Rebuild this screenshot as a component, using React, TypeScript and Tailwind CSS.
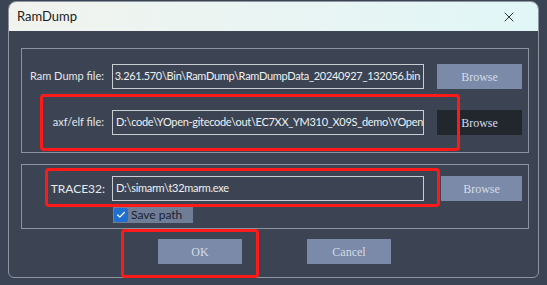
import { Check, X } from 'lucide-react'

const ui = { fontFamily: 'Lato, "Noto Sans", sans-serif' }
const btnFont = { fontFamily: '"Liberation Serif", "DejaVu Serif", serif' }

function PathInput({ value, alignEnd }: { value: string; alignEnd?: boolean }) {
  return (
    <div
      className={`flex h-[25px] w-[312px] items-center overflow-hidden whitespace-nowrap border border-[#c9ccd0] px-[3px] text-[11px] tracking-[-0.3px] text-[#eef0f2] ${alignEnd ? 'justify-end' : 'justify-start'}`}
      style={ui}
    >
      <span className="shrink-0">{value}</span>
    </div>
  )
}

function BrowseBtn({ dark, w = 'w-[85px]' }: { dark?: boolean; w?: string }) {
  return (
    <div
      className={`flex h-[25px] ${w} items-center justify-center text-[12px] text-[#d7dce6] ${dark ? 'bg-[#22272e]' : 'bg-[#7a8aa8]'}`}
      style={btnFont}
    >
      Browse
    </div>
  )
}

export default function App() {
  return (
    <div className="relative h-[285px] w-[547px] overflow-hidden bg-[#3a4454] pt-[1px] pl-[8px]">
      <div className="relative h-[277px] w-[531px] overflow-hidden rounded-t-[8px] rounded-b-[6px] border border-[#8e959f] bg-[#3c4453]">
        {/* title bar */}
        <div className="flex h-[29px] items-center justify-between bg-gradient-to-r from-[#f1f3ee] to-[#e1f6f7] pl-[8px] pr-[21px]">
          <span className="text-[13px] text-[#1a1a1a]" style={ui}>RamDump</span>
          <X className="h-[16px] w-[16px] text-[#222]" strokeWidth={1.4} />
        </div>

        <div className="px-[12px] pt-[17px]">
          {/* group 1 */}
          <div className="flex h-[105px] w-[508px] flex-col gap-[21px] border border-[#8c929b] pt-[15px]">
            <div className="flex items-center">
              <span className="w-[83px] shrink-0 whitespace-nowrap pr-[1px] text-right text-[11px] text-[#e3e6ea]" style={ui}>Ram Dump file:</span>
              <div className="ml-[7px]">
                <PathInput value="3.261.570\Bin\RamDump\RamDumpData_20240927_132056.bin" alignEnd />
              </div>
              <div className="ml-[13px]"><BrowseBtn /></div>
            </div>
            <div className="flex items-center">
              <span className="w-[83px] shrink-0 whitespace-nowrap pr-[1px] text-right text-[11px] text-[#e3e6ea]" style={ui}>axf/elf file:</span>
              <div className="ml-[7px]">
                <PathInput value="D:\code\YOpen-gitecode\out\EC7XX_YM310_X09S_demo\YOpen-gitecode.axf" />
              </div>
              <div className="ml-[13px]"><BrowseBtn dark /></div>
            </div>
          </div>

          {/* group 2 */}
          <div className="mt-[11px] flex h-[65px] w-[508px] flex-col border border-[#8c929b] pt-[11px]">
            <div className="flex items-center">
              <span className="w-[84px] shrink-0 whitespace-nowrap pr-[1px] text-right text-[12px] text-[#e6e9ec]" style={ui}>TRACE32:</span>
              <div className="ml-[6px]">
                <PathInput value="D:\simarm\t32marm.exe" />
              </div>
              <div className="ml-[17px]"><BrowseBtn w="w-[81px]" /></div>
            </div>
            <div className="ml-[91px] mt-[5px] flex h-[17px] w-[80px] items-center gap-[3px] bg-[#6f7d97] pl-[1px]">
              <div className="flex h-[14px] w-[14px] items-center justify-center rounded-[2px] bg-[#1f6fd1]">
                <Check className="h-[10px] w-[10px] text-white" strokeWidth={3} />
              </div>
              <span className="whitespace-nowrap text-[12px] text-[#1c2230]" style={ui}>Save path</span>
            </div>
          </div>

          {/* buttons */}
          <div className="mt-[10px] flex gap-[65px] pl-[137px]">
            <div className="flex h-[25px] w-[84px] items-center justify-center bg-[#7a8aa8] text-[12px] text-[#d7dce6]" style={btnFont}>OK</div>
            <div className="flex h-[25px] w-[84px] items-center justify-center bg-[#7a8aa8] text-[12px] text-[#d7dce6]" style={btnFont}>Cancel</div>
          </div>
        </div>
      </div>

      {/* red annotation boxes */}
      <div className="pointer-events-none absolute left-[40px] top-[94px] h-[57px] w-[420px] rounded-[4px] border-[3px] border-[#ff1a1a]" />
      <div className="pointer-events-none absolute left-[45px] top-[168px] h-[39px] w-[395px] rounded-[4px] border-[3px] border-[#ff1a1a]" />
      <div className="pointer-events-none absolute left-[121px] top-[229px] h-[49px] w-[138px] rounded-[4px] border-[3px] border-[#ff1a1a]" />
    </div>
  )
}
